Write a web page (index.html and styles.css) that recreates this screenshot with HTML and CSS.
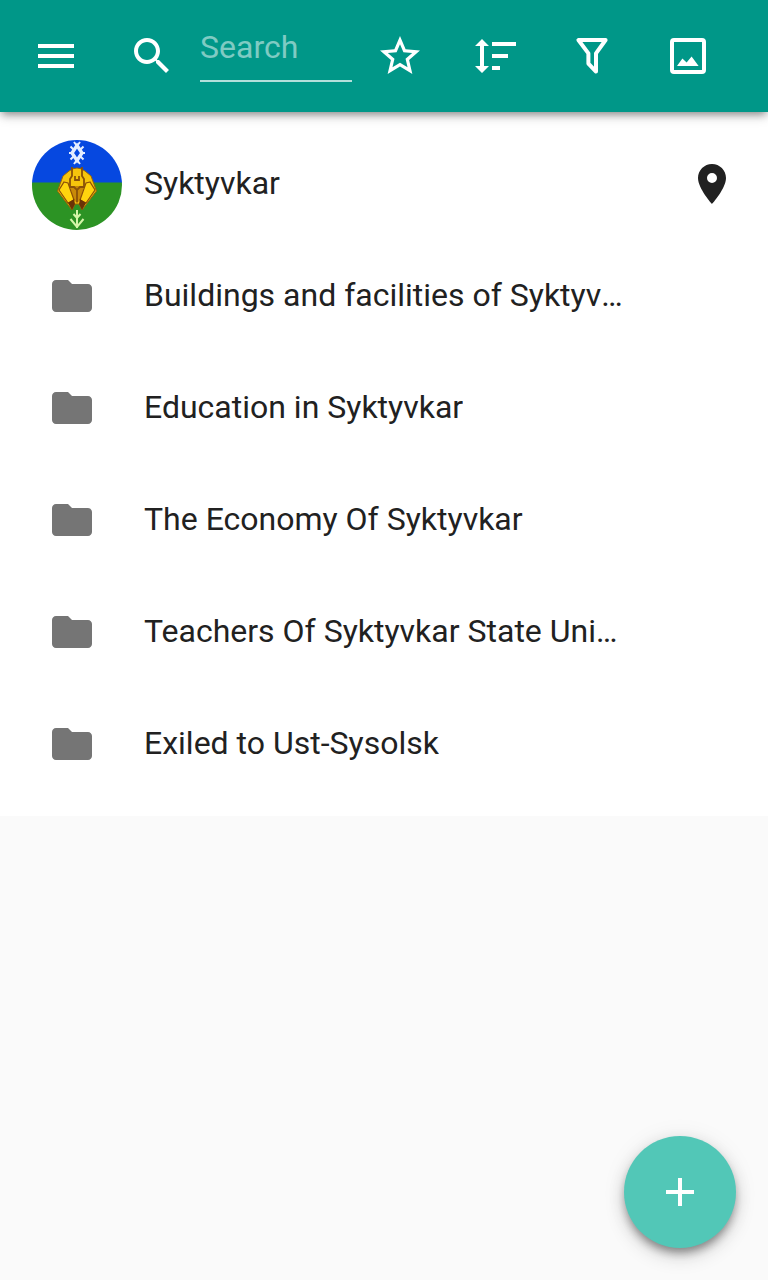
FILE: index.html
```html
<!DOCTYPE html>
<html lang="en">
<head>
    <meta charset="UTF-8">
    <meta name="viewport" content="width=device-width, initial-scale=1.0">
    <title>Syktyvkar</title>
    <link rel="stylesheet" href="styles.css">
</head>
<body>

    <!-- Shared folder icon -->
    <svg class="sprite" aria-hidden="true">
        <symbol id="folder" viewBox="0 0 24 24">
            <path d="M10 4H4c-1.1 0-2 .9-2 2v12c0 1.1.9 2 2 2h16c1.1 0 2-.9 2-2V8c0-1.1-.9-2-2-2h-8l-2-2z"/>
        </symbol>
    </svg>

    <!-- Top bar -->
    <header class="top-bar">
        <button class="icon-btn" type="button" aria-label="Menu">
            <svg class="icon" viewBox="0 0 24 24"><path d="M3 18h18v-2H3v2zm0-5h18v-2H3v2zm0-7v2h18V6H3z"/></svg>
        </button>
        <form class="search" role="search">
            <button class="icon-btn" type="submit" aria-label="Find">
                <svg class="icon" viewBox="0 0 24 24"><path d="M15.5 14h-.79l-.28-.27C15.41 12.59 16 11.11 16 9.5 16 5.91 13.09 3 9.5 3S3 5.91 3 9.5 5.91 16 9.5 16c1.61 0 3.09-.59 4.23-1.57l.27.28v.79l5 4.99L20.49 19l-4.99-5zm-6 0C7.01 14 5 11.99 5 9.5S7.01 5 9.5 5 14 7.01 14 9.5 11.99 14 9.5 14z"/></svg>
            </button>
            <input class="search-input" type="text" placeholder="Search" aria-label="Search">
        </form>
        <button class="icon-btn" type="button" aria-label="Favorites">
            <svg class="icon" viewBox="0 0 24 24"><path d="M22 9.24l-7.19-.62L12 2 9.19 8.63 2 9.24l5.46 4.73L5.82 21 12 17.27 18.18 21l-1.63-7.03L22 9.24zM12 15.4l-3.76 2.27 1-4.28-3.32-2.88 4.38-.38L12 6.1l1.71 4.04 4.38.38-3.32 2.88 1 4.28L12 15.4z"/></svg>
        </button>
        <button class="icon-btn" type="button" aria-label="Sort">
            <svg class="icon" viewBox="0 0 24 24"><path d="M10 5h12v2H10zM10 11h8v2h-8zM10 17h4v2h-4zM6 7h2.5L5 3.5 1.5 7H4v10H1.5L5 20.5 8.5 17H6z"/></svg>
        </button>
        <button class="icon-btn" type="button" aria-label="Filter">
            <svg class="icon" viewBox="0 0 24 24"><path class="line" d="M5.2 4h13.6L14 10.7V19.8L10.2 15.8V10.7z"/></svg>
        </button>
        <button class="icon-btn" type="button" aria-label="Pictures">
            <svg class="icon" viewBox="0 0 24 24"><rect class="line" x="4" y="4" width="16" height="16" rx="1"/><path d="M6.5 17l2.7-3.7 2.1 1.9 2.5-2.9 3.5 4.7z"/></svg>
        </button>
    </header>

    <!-- Categories -->
    <main>
        <ul class="list">
            <li class="row">
                <a class="row-link" href="#">
                    <span class="row-start">
                        <svg class="avatar" viewBox="0 0 90 90">
                            <clipPath id="round"><circle cx="45" cy="45" r="45"/></clipPath>
                            <g clip-path="url(#round)">
                                <path fill="#0648e0" d="M0 0h90v43H0z"/>
                                <path fill="#2c9324" d="M0 42.5h90V90H0z"/>
                                <!-- ornament -->
                                <g fill="none" stroke="#e4edff">
                                    <path stroke-width="3.4" d="M45 5.5l5 7.5-5 7.5-5-7.5z"/>
                                    <path stroke-width="2" d="M42 2l3 4 3-4M42 24l3-4 3 4M38.500 6.500l3 3M51.500 6.500l-3 3M38.500 19.500l3-3M51.500 19.500l-3-3M37 13h3M50 13h3"/>
                                </g>
                                <!-- bear mask -->
                                <path fill="#f6c50c" stroke="#9a6208" d="M37 31q8-6 16 0l6 5 5.500 15-14.500 19-3-6h-4l-3 6-14.500-19 5.500-15z"/>
                                <path fill="#c98a08" d="M38 46h14l-3 12-4 6-4-6z"/>
                                <path fill="#ffd40e" stroke="#8b4f07" stroke-width="1.200" d="M32 42l4 1 6 17-6 3-9-13zM58 42l-4 1-6 17 6 3 9-13z"/>
                                <path fill="#6a3206" d="M36 63l6-4 1 5-3 6zM54 63l-6-4-1 5 3 6z"/>
                                <path fill="none" stroke="#8a5208" stroke-width="1.800" d="M40 27v9l-2 3v8h4l3 3 3-3h4v-8l-2-3v-9M43 36v4h4v-4M45 50v12"/>
                                <!-- sprout -->
                                <path fill="none" stroke="#d3f5a8" stroke-width="2" d="M45 70v18M41.500 74l3.500 4 3.500-4M38.500 79l6.500 8 6.500-8"/>
                            </g>
                        </svg>
                    </span>
                    <span class="row-title">Syktyvkar</span>
                </a>
                <button class="place-btn" type="button" aria-label="Show on map">
                    <svg class="icon" viewBox="0 0 24 24"><path d="M12 2C8.130 2 5 5.130 5 9c0 5.250 7 13 7 13s7-7.750 7-13c0-3.870-3.130-7-7-7zm0 9.500a2.500 2.500 0 0 1 0-5 2.500 2.500 0 0 1 0 5z"/></svg>
                </button>
            </li>
            <li class="row">
                <a class="row-link" href="#">
                    <span class="row-start"><svg class="icon folder"><use href="#folder"/></svg></span>
                    <span class="row-title">Buildings and facilities of Syktyvkar</span>
                </a>
            </li>
            <li class="row">
                <a class="row-link" href="#">
                    <span class="row-start"><svg class="icon folder"><use href="#folder"/></svg></span>
                    <span class="row-title">Education in Syktyvkar</span>
                </a>
            </li>
            <li class="row">
                <a class="row-link" href="#">
                    <span class="row-start"><svg class="icon folder"><use href="#folder"/></svg></span>
                    <span class="row-title">The Economy Of Syktyvkar</span>
                </a>
            </li>
            <li class="row">
                <a class="row-link" href="#">
                    <span class="row-start"><svg class="icon folder"><use href="#folder"/></svg></span>
                    <span class="row-title">Teachers Of Syktyvkar State University</span>
                </a>
            </li>
            <li class="row">
                <a class="row-link" href="#">
                    <span class="row-start"><svg class="icon folder"><use href="#folder"/></svg></span>
                    <span class="row-title">Exiled to Ust-Sysolsk</span>
                </a>
            </li>
        </ul>
    </main>

    <!-- Add button -->
    <button class="fab" type="button" aria-label="Add">
        <svg class="icon" viewBox="0 0 24 24"><path d="M19 13h-6v6h-2v-6H5v-2h6V5h2v6h6v2z"/></svg>
    </button>

</body>
</html>
```
FILE: styles.css
```css
* {
    box-sizing: border-box;
}

body {
    margin: 0;
    min-height: 100vh;
    font-family: Roboto, 'Liberation Sans', sans-serif;
    font-size: 32px;
    line-height: 40px;
    background-color: #fafafa;
    color: #212121;
}

button {
    padding: 0;
    border: none;
    background: none;
    color: inherit;
    cursor: pointer;
}

.sprite {
    display: none;
}

.icon {
    display: block;
    width: 48px;
    height: 48px;
    fill: currentColor;
}

.line {
    fill: none;
    stroke: currentColor;
    stroke-width: 2;
    stroke-linejoin: round;
}

/* Top bar */
.top-bar {
    position: sticky;
    top: 0;
    z-index: 10;
    display: flex;
    height: 112px;
    padding: 0 32px 0 8px;
    background-color: #009788;
    color: #fff;
    box-shadow: 0 4px 8px -2px rgba(0, 0, 0, 0.4), 0 4px 12px rgba(0, 0, 0, 0.14);
}

.icon-btn {
    display: flex;
    flex: none;
    align-items: center;
    justify-content: center;
    width: 96px;
}

.search {
    display: flex;
    flex: 1;
    min-width: 0;
}

.search-input {
    flex: 1;
    align-self: flex-start;
    min-width: 0;
    height: 66px;
    margin-top: 16px;
    padding: 0 0 2px;
    border: none;
    border-bottom: 2px solid rgba(255, 255, 255, 0.7);
    border-radius: 0;
    outline: none;
    background: none;
    color: #fff;
    font: inherit;
}

.search-input::placeholder {
    color: rgba(255, 255, 255, 0.5);
    opacity: 1;
}

/* List */
.list {
    margin: 0;
    padding: 16px 0;
    list-style: none;
    background-color: #fff;
}

.row {
    display: flex;
    align-items: center;
    height: 112px;
    padding: 0 32px;
}

.row-link {
    display: flex;
    flex: 1;
    align-items: center;
    min-width: 0;
    color: inherit;
    text-decoration: none;
}

.row-start {
    flex: none;
    width: 112px;
}

.folder {
    margin-left: 16px;
    color: #757575;
}

.avatar {
    display: block;
    width: 90px;
    height: 90px;
    margin-top: 2px;
}

.row-title {
    overflow: hidden;
    max-width: 480px;
    padding-bottom: 2px;
    white-space: nowrap;
    text-overflow: ellipsis;
}

.place-btn {
    flex: none;
}

/* Add button */
.fab {
    position: fixed;
    right: 32px;
    bottom: 32px;
    display: flex;
    align-items: center;
    justify-content: center;
    width: 112px;
    height: 112px;
    border-radius: 50%;
    background-color: #52c7b7;
    color: #fff;
    box-shadow: 0 6px 10px -2px rgba(0, 0, 0, 0.4), 0 8px 20px rgba(0, 0, 0, 0.16), 0 2px 24px rgba(0, 0, 0, 0.08);
}
```
